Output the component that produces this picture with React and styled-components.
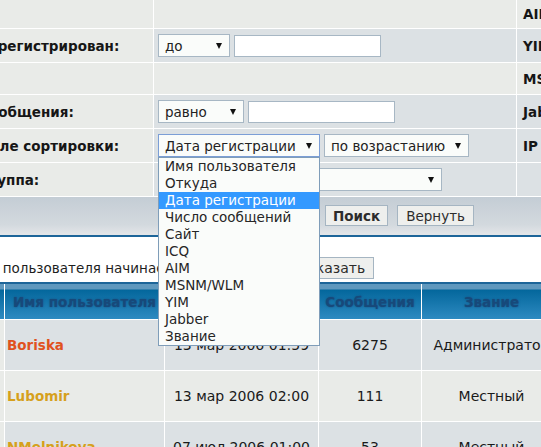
import React from 'react';
import styled, { createGlobalStyle } from 'styled-components';

const Global = createGlobalStyle`
  html, body { margin: 0; padding: 0; background: #fff; overflow: hidden; }
  body { font-family: "DejaVu Sans", Verdana, sans-serif; }
`;

const LIGHT = '#e9ebe8';
const DARK = '#dce1e4';

const Viewport = styled.div`
  width: 541px;
  height: 447px;
  overflow: hidden;
  position: relative;
  background: #fff;
`;

const Page = styled.div`
  margin-left: -34px;
  width: 640px;
`;

const FormGrid = styled.div`
  display: grid;
  grid-template-columns: 187px 362px 1fr;
  grid-template-rows: 28px 33px 31px 33px 33px 33px 37px;
  gap: 1px;
  background: #fff;
`;

const Cell = styled.div`
  background: ${p => (p.$tone === 'dark' ? DARK : LIGHT)};
  display: flex;
  align-items: center;
  gap: 4px;
  padding: 0 4px;
  white-space: nowrap;
  min-width: 0;
`;

const LabelCell = styled(Cell)`
  padding-left: 13px;
  font-weight: bold;
  font-size: 13.5px;
  color: #161616;
`;

const SideCell = styled(Cell)`
  padding-left: 6px;
  font-weight: bold;
  font-size: 13.5px;
  color: #161616;
  overflow: hidden;
`;

const SelectBox = styled.div`
  position: relative;
  box-sizing: border-box;
  flex: 0 0 auto;
  width: ${p => p.$w}px;
  height: 23px;
  border: 1px solid ${p => (p.$focus ? '#7b9ed6' : '#a7b7c4')};
  background: #fafcfa;
  font-size: 13.5px;
  color: #222;
  display: flex;
  align-items: center;
  padding-left: 6px;
  &::after {
    content: '';
    position: absolute;
    right: 7px;
    top: 8px;
    border-left: 3.5px solid transparent;
    border-right: 3.5px solid transparent;
    border-top: 6px solid #111;
  }
`;

const TextInput = styled.input`
  box-sizing: border-box;
  width: ${p => p.$w}px;
  height: 22px;
  margin: 0;
  border: 1px solid #a7b7c4;
  background: #fff;
  font-family: inherit;
  font-size: 13.5px;
  padding: 0 4px;
  outline: none;
`;

const DropList = styled.ul`
  position: absolute;
  left: -1px;
  top: calc(100% + 1px);
  width: 162px;
  box-sizing: border-box;
  margin: 0;
  padding: 0;
  list-style: none;
  border: 1px solid #7f9db9;
  background: #fafcfa;
  z-index: 10;
`;

const DropItem = styled.li`
  height: 17px;
  line-height: 17px;
  padding-left: 6px;
  font-size: 13.5px;
  color: ${p => (p.$active ? '#fff' : '#262626')};
  background: ${p => (p.$active ? '#3399ff' : 'transparent')};
`;

const CatBottom = styled.div`
  grid-column: 1 / -1;
  background: linear-gradient(to bottom, #c4cdd5 0%, #d3d9de 75%, #e2e5e8 100%);
  display: flex;
  align-items: center;
  gap: 9px;
  padding-left: 359px;
`;

const Button = styled.button`
  box-sizing: border-box;
  height: ${p => (p.$tall ? 22 : 21)}px;
  margin: 0;
  padding: 0 ${p => (p.$primary ? 7 : 8)}px;
  font-family: inherit;
  font-size: ${p => (p.$tall ? 14 : 13.5)}px;
  font-weight: ${p => (p.$primary ? 'bold' : 'normal')};
  color: #2c2c2c;
  background: #eeefed;
  border: 1px solid #a5b5c2;
`;

const Rule = styled.div`
  height: 2px;
  background: #1d6599;
  border-top: 1px solid #e2e5e8;
`;

const BottomRule = styled.div`
  height: 2px;
  background: #1d6599;
`;

const FilterBar = styled.div`
  box-sizing: border-box;
  height: 45px;
  padding: 20px 0 3px 4px;
  display: flex;
  align-items: center;
  gap: 6px;
  font-size: 13.5px;
  color: #1e1e1e;
  white-space: nowrap;
`;

const DataGrid = styled.div`
  display: grid;
  width: 595px;
  grid-template-columns: 38px 159px 153px 102px 1fr;
  grid-template-rows: 35px;
  grid-auto-rows: 50px;
  gap: 1px;
  background: #fff;
`;

const HeadCell = styled.div`
  background: linear-gradient(to bottom, #5f98be 0, #5f98be 5px, #04679c 6px, #2d8ac1 100%);
  color: #17497a;
  font-weight: bold;
  font-size: 13.5px;
  display: flex;
  align-items: center;
  justify-content: center;
  white-space: nowrap;
  text-shadow: 0 0 2px rgba(23, 73, 122, 0.9);
`;

const DataCell = styled.div`
  background: ${p => (p.$tone === 'dark' ? DARK : LIGHT)};
  display: flex;
  align-items: center;
  justify-content: ${p => (p.$left ? 'flex-start' : 'center')};
  padding-left: ${p => (p.$left ? '2px' : '0')};
  font-size: 14px;
  color: #1a1a1a;
  white-space: nowrap;
  overflow: hidden;
`;

const UserName = styled.span`
  color: ${p => p.$color};
  font-weight: bold;
  font-size: 13.5px;
`;

const sortOptions = [
  'Имя пользователя',
  'Откуда',
  'Дата регистрации',
  'Число сообщений',
  'Сайт',
  'ICQ',
  'AIM',
  'MSNM/WLM',
  'YIM',
  'Jabber',
  'Звание',
];

const members = [
  { name: 'Boriska', color: '#e0521e', date: '13 мар 2006 01:59', posts: '6275', rank: 'Администратор' },
  { name: 'Lubomir', color: '#d6a01c', date: '13 мар 2006 02:00', posts: '111', rank: 'Местный' },
  { name: 'NMelnikova', color: '#d6a01c', date: '07 июл 2006 01:00', posts: '53', rank: 'Местный' },
];

export default function App() {
  return (
    <>
      <Global />
      <Viewport>
        <Page>
          <FormGrid>
            <LabelCell />
            <Cell />
            <SideCell>AIM:</SideCell>

            <LabelCell>Зарегистрирован:</LabelCell>
            <Cell $tone="dark">
              <SelectBox $w={72}>до</SelectBox>
              <TextInput $w={147} />
            </Cell>
            <SideCell $tone="dark">YIM:</SideCell>

            <LabelCell />
            <Cell />
            <SideCell>MSNM:</SideCell>

            <LabelCell>Сообщения:</LabelCell>
            <Cell $tone="dark">
              <SelectBox $w={86}>равно</SelectBox>
              <TextInput $w={147} />
            </Cell>
            <SideCell $tone="dark">Jabber:</SideCell>

            <LabelCell>Поле сортировки:</LabelCell>
            <Cell $tone="dark">
              <SelectBox $w={162} $focus>
                Дата регистрации
                <DropList>
                  {sortOptions.map(o => (
                    <DropItem key={o} $active={o === 'Дата регистрации'}>{o}</DropItem>
                  ))}
                </DropList>
              </SelectBox>
              <SelectBox $w={145}>по возрастанию</SelectBox>
            </Cell>
            <SideCell $tone="dark">IP адрес:</SideCell>

            <LabelCell>Группа:</LabelCell>
            <Cell $tone="dark">
              <SelectBox $w={284} />
            </Cell>
            <SideCell $tone="dark" />

            <CatBottom>
              <Button $primary>Поиск</Button>
              <Button>Вернуть</Button>
            </CatBottom>
          </FormGrid>

          <Rule />
          <FilterBar>
            <span>Имя пользователя начинается с</span>
            <SelectBox $w={76}>Все</SelectBox>
            <Button $tall>Показать</Button>
          </FilterBar>
          <BottomRule />

          <DataGrid>
            <HeadCell>#</HeadCell>
            <HeadCell>Имя пользователя</HeadCell>
            <HeadCell>Зарегистрирован</HeadCell>
            <HeadCell>Сообщения</HeadCell>
            <HeadCell>Звание</HeadCell>
            {members.map((m, i) => {
              const tone = i % 2 === 0 ? 'dark' : 'light';
              return (
                <React.Fragment key={m.name}>
                  <DataCell />
                  <DataCell $tone={tone} $left>
                    <UserName $color={m.color}>{m.name}</UserName>
                  </DataCell>
                  <DataCell $tone={tone}>{m.date}</DataCell>
                  <DataCell $tone={tone}>{m.posts}</DataCell>
                  <DataCell $tone={tone}>{m.rank}</DataCell>
                </React.Fragment>
              );
            })}
          </DataGrid>
        </Page>
      </Viewport>
    </>
  );
}
